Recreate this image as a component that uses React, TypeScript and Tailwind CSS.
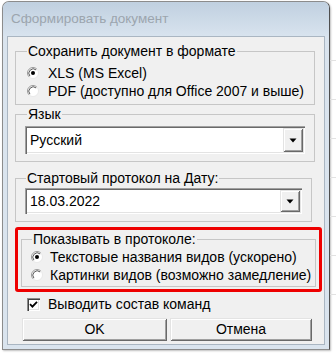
import React from 'react';

const Radio: React.FC<{ checked?: boolean }> = ({ checked }) => (
  <svg width="12" height="12" viewBox="0 0 12 12" className="shrink-0">
    <circle cx="6" cy="6" r="5.5" fill="#ffffff" />
    <path d="M2.1 9.9 A5.5 5.5 0 0 1 9.9 2.1" fill="none" stroke="#9a9a9a" strokeWidth="1" />
    <path d="M9.9 2.1 A5.5 5.5 0 0 1 2.1 9.9" fill="none" stroke="#e8e8e8" strokeWidth="1" />
    <path d="M2.9 9.1 A4.4 4.4 0 0 1 9.1 2.9" fill="none" stroke="#5a5a5a" strokeWidth="1" />
    {checked && <circle cx="6" cy="6" r="2" fill="#000000" />}
  </svg>
);

const Checkbox: React.FC = () => (
  <div className="w-[13px] h-[13px] shrink-0 bg-white shadow-[inset_1px_1px_0_#8a8a8a,inset_2px_2px_0_#404040,inset_-1px_-1px_0_#ffffff,inset_-2px_-2px_0_#e3e3e3] flex items-center justify-center">
    <svg width="9" height="9" viewBox="0 0 9 9">
      <path d="M1 4.2 L3.4 6.6 L8 1.8" fill="none" stroke="#000" strokeWidth="1.8" />
    </svg>
  </div>
);

const Combo: React.FC<{ value: string; h: string }> = ({ value, h }) => (
  <div className={`${h} w-full bg-white flex items-center pl-[5px] pr-[2px] shadow-[inset_1px_1px_0_#a0a0a0,inset_2px_2px_0_#696969,inset_-1px_-1px_0_#ffffff,inset_-2px_-2px_0_#e3e3e3]`}>
    <span className="flex-1 text-[14px] text-black">{value}</span>
    <div className="w-[20px] h-[calc(100%-4px)] bg-[#f0f0f0] flex items-center justify-center shadow-[inset_1px_1px_0_#e3e3e3,inset_-1px_-1px_0_#696969,inset_2px_2px_0_#ffffff,inset_-2px_-2px_0_#a0a0a0]">
      <svg width="8" height="5" viewBox="0 0 8 5">
        <path d="M0.5 0.5 L7.5 0.5 L4 4.5 Z" fill="#000" />
      </svg>
    </div>
  </div>
);

const Option: React.FC<{ checked?: boolean; label: string; gap: string }> = ({ checked, label, gap }) => (
  <div className={`h-[18px] flex items-center ${gap}`}>
    <Radio checked={checked} />
    <span className="text-[14px] text-black whitespace-nowrap">{label}</span>
  </div>
);

export default function App() {
  return (
    <div className="w-[336px] h-[355px] bg-white flex overflow-hidden font-['Liberation_Sans',Arial,sans-serif]">
      {/* dialog window */}
      <div className="w-[328px] h-[349px] ml-[2px] mt-[1px] flex flex-col rounded-t-[7px] border border-[#8c8c8c] border-r-[#4f4f4f] bg-[#dae4ee] shadow-[1px_1px_2px_rgba(0,0,0,0.25)]">
        <div className="h-[34px] shrink-0 px-[8px] flex items-center rounded-t-[6px] bg-gradient-to-b from-[#c0d0e0] to-[#d8e3ee] text-[13.5px] text-[#9ca5ae]">
          Сформировать документ
        </div>
        <div className="flex-1 mx-[4px] mb-[4px] bg-[#f0f0f0] border border-[#aab6c2] flex flex-col pl-[7px] pr-[9px]">
          {/* format */}
          <fieldset className="mt-[7px] w-[300px] border border-[#c6c6c6] pl-[11px] pb-[4px]">
            <legend className="px-[1px] text-[14px] leading-[14px] text-black">Сохранить документ в формате</legend>
            <div className="mt-[6px] flex flex-col">
              <Option checked label="XLS (MS Excel)" gap="gap-[9px]" />
              <Option label="PDF (доступно для Office 2007 и выше)" gap="gap-[9px]" />
            </div>
          </fieldset>

          {/* language */}
          <fieldset className="mt-[2px] w-[300px] border border-[#c6c6c6] px-[9px] pb-[7px]">
            <legend className="ml-[2px] px-[1px] text-[14px] leading-[14px] text-black">Язык</legend>
            <div className="mt-[5px]">
              <Combo value="Русский" h="h-[28px]" />
            </div>
          </fieldset>

          {/* date */}
          <fieldset className="mt-[9px] w-[297px] border border-[#c6c6c6] px-[9px] pb-[7px]">
            <legend className="ml-[1px] px-[1px] text-[14px] leading-[14px] text-black">Стартовый протокол на Дату:</legend>
            <div className="mt-[3px]">
              <Combo value="18.03.2022" h="h-[26px]" />
            </div>
          </fieldset>

          {/* highlighted group */}
          <div className="mt-[5px] w-[307px] border-[3px] border-[#ee0000] rounded-[3px] px-[3px] pb-[2px]">
            <fieldset className="mt-[2px] border border-[#c6c6c6] pl-[9px] pb-[2px]">
              <legend className="ml-[1px] px-[1px] text-[14px] leading-[14px] text-black">Показывать в протоколе:</legend>
              <div className="mt-[2px] flex flex-col">
                <Option checked label="Текстовые названия видов (ускорено)" gap="gap-[7px]" />
                <Option label="Картинки видов (возможно замедление)" gap="gap-[7px]" />
              </div>
            </fieldset>
          </div>

          <div className="mt-[3px] h-[18px] ml-[12px] flex items-center gap-[8px]">
            <Checkbox />
            <span className="text-[14px] text-black">Выводить состав команд</span>
          </div>

          <div className="mt-[5px] ml-[7px] flex gap-[3px]">
            <button className="w-[145px] h-[23px] bg-[#f0f0f0] text-[14px] text-black shadow-[inset_1px_1px_0_#e3e3e3,inset_-1px_-1px_0_#696969,inset_2px_2px_0_#ffffff,inset_-2px_-2px_0_#a0a0a0]">
              OK
            </button>
            <button className="w-[142px] h-[23px] bg-[#f0f0f0] text-[14px] text-black shadow-[inset_1px_1px_0_#e3e3e3,inset_-1px_-1px_0_#696969,inset_2px_2px_0_#ffffff,inset_-2px_-2px_0_#a0a0a0]">
              Отмена
            </button>
          </div>
        </div>
      </div>

      {/* sheet behind the dialog */}
      <div className="flex-1 flex flex-col">
        <div className="h-[61px] border-b border-[#e2e2e2]" />
        <div className="h-[39px] border-b border-[#e2e2e2]" />
        <div className="h-[39px] border-b border-[#e2e2e2]" />
        <div className="h-[39px] border-b border-[#e2e2e2]" />
        <div className="h-[39px] border-b border-[#e2e2e2]" />
        <div className="h-[39px] border-b border-[#e2e2e2]" />
        <div className="h-[39px] border-b border-[#e2e2e2]" />
      </div>
    </div>
  );
}
